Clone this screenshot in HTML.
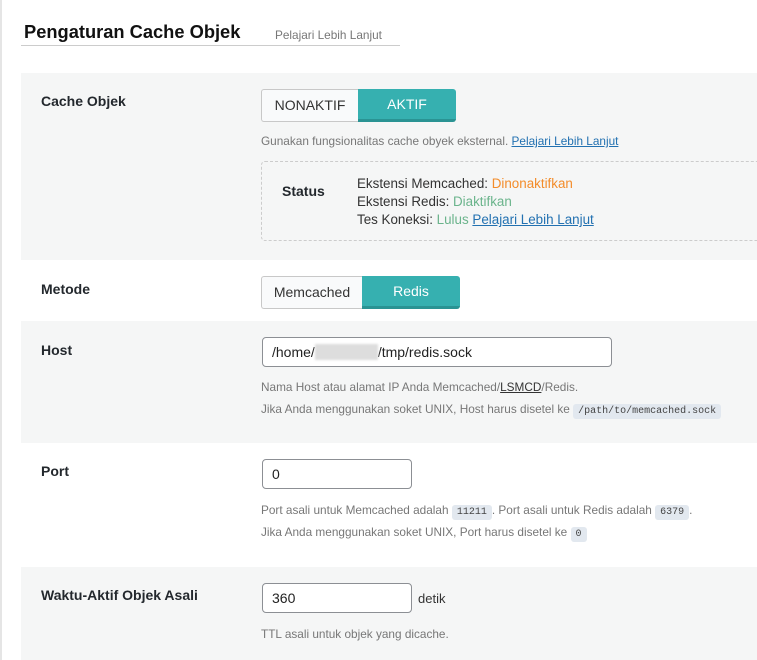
<!DOCTYPE html>
<html><head><meta charset="utf-8"><style>
*{margin:0;padding:0;box-sizing:border-box}
body{width:757px;height:660px;overflow:hidden;background:#fff;font-family:"Liberation Sans","DejaVu Sans",sans-serif;color:#333;position:relative}
.a{position:absolute;white-space:nowrap}
.lb{font-weight:bold;font-size:14px;color:#23282d}
.g{background:#f5f6f6}
.d{font-size:11.8px;color:#777}
.btn{position:absolute;height:33px;font-size:14px;text-align:center;line-height:31px}
.off{background:#f9fafb;border:1px solid #c8c8c8;border-right:none;border-radius:3px 0 0 3px;color:#333}
.on{background:#36b0b0;color:#fff;border-bottom:3px solid #2a9393;line-height:31px;border-radius:0 3px 3px 0}
.in{position:absolute;border:1px solid #8c8f94;border-radius:4px;background:#fff;font-size:14px;padding-left:9px;line-height:28px;height:30px;color:#222}
code{font-family:"Liberation Mono",monospace;font-size:10px;background:#e2e8ef;padding:2px 5px;border-radius:3px;color:#444}
a{color:#2271b1;text-decoration:underline}
</style></head><body>
<div class="a" style="left:0;top:0;width:2px;height:660px;background:#e5e5e5"></div>
<div class="a" style="left:24px;top:21px;font-size:18.3px;font-weight:bold;color:#111">Pengaturan Cache Objek</div>
<div class="a" style="left:275px;top:28px;font-size:11.8px;color:#777">Pelajari Lebih Lanjut</div>
<div class="a" style="left:21px;top:45px;width:379px;height:1px;background:#ccc"></div>

<div class="a g" style="left:21px;top:73px;width:736px;height:187px"></div>
<div class="a lb" style="left:41px;top:93px">Cache Objek</div>
<div class="btn off" style="left:261px;top:89px;width:97px">NONAKTIF</div>
<div class="btn on" style="left:358px;top:89px;width:98px">AKTIF</div>
<div class="a d" style="left:261px;top:134px">Gunakan fungsionalitas cache obyek eksternal. <a>Pelajari Lebih Lanjut</a></div>
<div class="a" style="left:261px;top:161px;width:510px;height:80px;border:1px dashed #ccc;border-radius:4px"></div>
<div class="a lb" style="left:282px;top:183px">Status</div>
<div class="a" style="left:357px;top:175px;font-size:13.4px;line-height:18px;color:#333">Ekstensi Memcached: <span style="color:#f38c2a">Dinonaktifkan</span><br>Ekstensi Redis: <span style="color:#6bb48c">Diaktifkan</span><br>Tes Koneksi: <span style="color:#6bb48c">Lulus</span> <a>Pelajari Lebih Lanjut</a></div>

<div class="a lb" style="left:41px;top:281px">Metode</div>
<div class="btn off" style="left:261px;top:276px;width:101px">Memcached</div>
<div class="btn on" style="left:362px;top:276px;width:98px">Redis</div>

<div class="a g" style="left:21px;top:321px;width:736px;height:122px"></div>
<div class="a lb" style="left:41px;top:342px">Host</div>
<div class="in" style="left:262px;top:337px;width:350px">/home/<span style="background:#ddd;color:#ddd;filter:blur(1px)">xxxxxxxxx</span>/tmp/redis.sock</div>
<div class="a d" style="left:261px;top:380px">Nama Host atau alamat IP Anda Memcached/<a style="color:#333">LSMCD</a>/Redis.</div>
<div class="a d" style="left:261px;top:402px">Jika Anda menggunakan soket UNIX, Host harus disetel ke <code>/path/to/memcached.sock</code></div>

<div class="a lb" style="left:41px;top:463px">Port</div>
<div class="in" style="left:262px;top:459px;width:150px">0</div>
<div class="a d" style="left:261px;top:503px">Port asali untuk Memcached adalah <code>11211</code>. Port asali untuk Redis adalah <code>6379</code>.</div>
<div class="a d" style="left:261px;top:525px">Jika Anda menggunakan soket UNIX, Port harus disetel ke <code>0</code></div>

<div class="a g" style="left:21px;top:567px;width:736px;height:93px"></div>
<div class="a lb" style="left:41px;top:587px">Waktu-Aktif Objek Asali</div>
<div class="in" style="left:262px;top:583px;width:150px">360</div>
<div class="a" style="left:418px;top:591px;font-size:13px">detik</div>
<div class="a d" style="left:261px;top:627px">TTL asali untuk objek yang dicache.</div>
</body></html>
